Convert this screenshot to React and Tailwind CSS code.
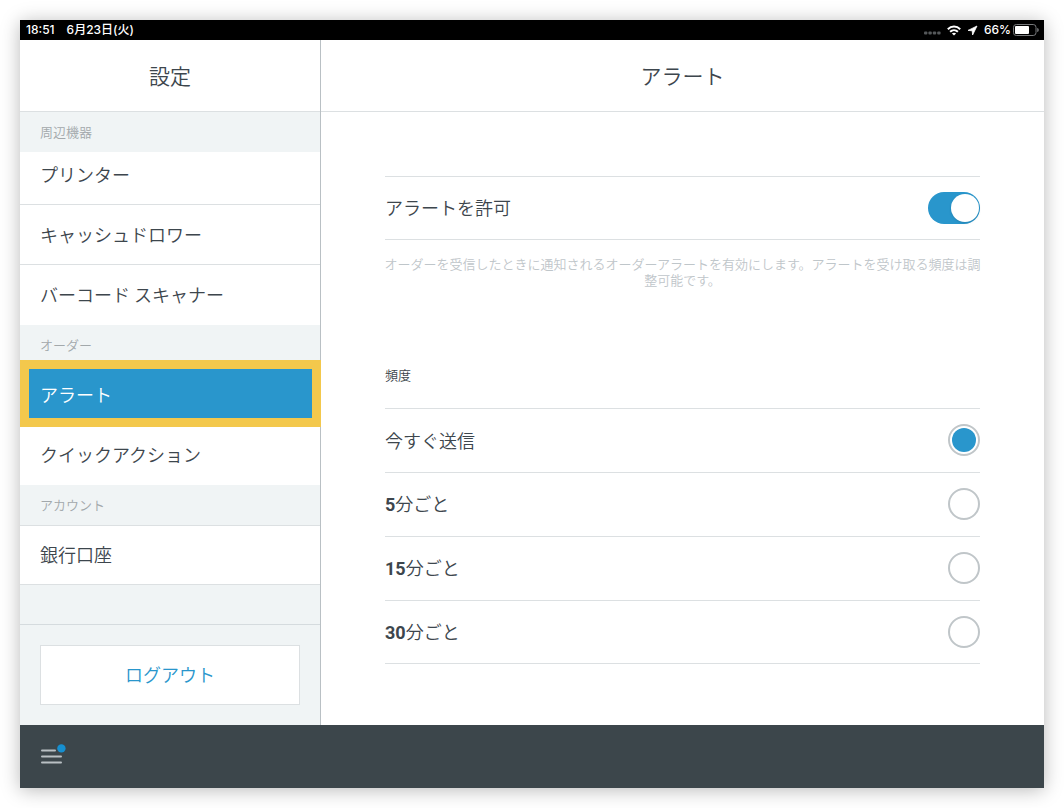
import { useState } from "react";

const peripherals = ["キャッシュドロワー", "バーコード スキャナー"];

const frequencies = [
  { id: "now", number: "", label: "今すぐ送信" },
  { id: "5", number: "5", label: "分ごと" },
  { id: "15", number: "15", label: "分ごと" },
  { id: "30", number: "30", label: "分ごと" },
];

function StatusBar() {
  return (
    <div className="flex h-5 shrink-0 items-center justify-between bg-black pl-1.5 pr-[5px] font-['Inter','Noto_Sans_CJK_JP',sans-serif] text-xs leading-5 font-medium text-white">
      <div className="flex gap-3">
        <span>18:51</span>
        <span>6月23日(火)</span>
      </div>
      <div className="flex items-center">
        <svg className="mt-1.5" width="17" height="4" viewBox="0 0 17 4" fill="#55585a" aria-hidden="true">
          <rect x="0" y="0.5" width="3.4" height="3" rx="1" />
          <rect x="4.4" y="0.5" width="3.4" height="3" rx="1" />
          <rect x="8.8" y="0.5" width="3.4" height="3" rx="1" />
          <rect x="13.2" y="0.5" width="3.4" height="3" rx="1" />
        </svg>
        <svg className="ml-1.5" width="14" height="11" viewBox="0 0 14 11" fill="none" stroke="#fff" strokeWidth="2" aria-hidden="true">
          <path d="M0.8 4.2C4.4 0.7 9.6 0.7 13.2 4.2" />
          <path d="M3.1 6.7C5.3 4.6 8.7 4.6 10.9 6.7" />
          <path d="M7 10.6L4.9 8.5C6.1 7.4 7.9 7.4 9.1 8.5Z" fill="#fff" stroke="none" />
        </svg>
        <svg className="ml-1.5" width="11" height="11" viewBox="0 0 11 11" fill="#fff" stroke="#fff" strokeWidth="0.8" strokeLinejoin="round" aria-hidden="true">
          <path d="M10 1L1 5.4L5.2 5.8L5.6 10Z" />
        </svg>
        <span className="ml-1.5">66%</span>
        <svg className="ml-0.5" width="26" height="12" viewBox="0 0 26 12" aria-hidden="true">
          <rect x="0.5" y="0.5" width="22.5" height="11" rx="2.8" fill="none" stroke="#77797b" />
          <rect x="2" y="2" width="14" height="8" rx="1" fill="#fff" />
          <path d="M24.2 4V8C25.4 7.6 25.8 6.8 25.8 6C25.8 5.2 25.4 4.4 24.2 4Z" fill="#77797b" />
        </svg>
      </div>
    </div>
  );
}

function SectionTitle({ children }) {
  return <h2 className="flex h-10 shrink-0 items-center px-5 pb-px text-[13px] leading-5 text-[#a2a8ab]">{children}</h2>;
}

function Sidebar() {
  return (
    <aside className="flex w-[301px] shrink-0 flex-col border-r border-[#b9c0c4] bg-[#f0f4f5]">
      <h1 className="flex h-18 shrink-0 items-center justify-center border-b border-[#dce0e2] bg-white pb-0.5 text-[21px] leading-8">設定</h1>

      <nav className="flex flex-col text-lg leading-7">
        <SectionTitle>周辺機器</SectionTitle>
        <a href="#printer" className="flex h-[53px] items-center border-b border-[#dce0e2] bg-white px-5 pb-2">
          プリンター
        </a>
        <div className="divide-y divide-[#dce0e2] bg-white">
          {peripherals.map((name) => (
            <a key={name} href={`#${name}`} className="flex h-15 items-center px-5 pb-0.5">
              {name}
            </a>
          ))}
        </div>

        <SectionTitle>オーダー</SectionTitle>
        <a href="#alerts" aria-current="page" className="relative flex h-15 items-center bg-[#2996cc] px-5 pb-0.5 text-white">
          アラート
          <span className="pointer-events-none absolute -top-[5px] -right-px -bottom-[2px] left-0 border-9 border-[#f3c84c]" />
        </a>
        <a href="#quick-actions" className="flex h-15 items-center bg-white px-5 pb-0.5">
          クイックアクション
        </a>

        <SectionTitle>アカウント</SectionTitle>
        <a href="#bank" className="flex h-15 items-center border-y border-[#dce0e2] bg-white px-5 pb-0.5">
          銀行口座
        </a>
      </nav>

      <div className="mt-auto border-t border-[#d5dbde] p-5">
        <button type="button" className="h-15 w-full border border-[#dce0e2] bg-white pb-0.5 text-lg text-[#2996cc]">
          ログアウト
        </button>
      </div>
    </aside>
  );
}

function AlertSettings() {
  const [enabled, setEnabled] = useState(true);
  const [frequency, setFrequency] = useState("now");

  return (
    <main className="min-w-0 flex-1 bg-white">
      <h1 className="flex h-18 items-center justify-center border-b border-[#dce0e2] pb-0.5 text-[21px] leading-8">アラート</h1>

      <div className="px-16 pt-16 pb-10 text-lg leading-7">
        <div className="flex h-16 items-center justify-between border-y border-[#dce0e2]">
          <label htmlFor="allow-alerts" className="pb-0.5">アラートを許可</label>
          <input
            id="allow-alerts"
            type="checkbox"
            role="switch"
            checked={enabled}
            onChange={(e) => setEnabled(e.target.checked)}
            className="flex h-8 w-13 cursor-pointer appearance-none items-center rounded-full bg-[#c0c6c9] px-px before:size-7 before:rounded-full before:bg-white before:shadow checked:justify-end checked:bg-[#2996cc]"
          />
        </div>
        <p className="-mx-1 mt-4 text-center text-[13px] leading-4 text-[#bfc6ca]">
          オーダーを受信したときに通知されるオーダーアラートを有効にします。アラートを受け取る頻度は調整可能です。
        </p>

        <fieldset className="mt-[77px]">
          <legend className="mb-[23px] text-[13px] leading-5">頻度</legend>
          {frequencies.map(({ id, number, label }) => (
            <div key={id} className="flex h-16 items-center justify-between border-t border-[#dce0e2] pb-px last:border-b last:pb-0">
              <label htmlFor={`frequency-${id}`} className="pb-px">
                {number && <b className="font-['Roboto',sans-serif] font-bold">{number}</b>}
                {label}
              </label>
              <input
                id={`frequency-${id}`}
                type="radio"
                name="frequency"
                checked={frequency === id}
                onChange={() => setFrequency(id)}
                className="flex size-8 cursor-pointer appearance-none items-center justify-center rounded-full border-2 border-[#c0c6c9] bg-white before:size-6 before:rounded-full checked:before:bg-[#2996cc]"
              />
            </div>
          ))}
        </fieldset>
      </div>
    </main>
  );
}

function BottomBar() {
  return (
    <footer className="flex h-[63px] shrink-0 items-center bg-[#3c464b] px-5">
      <button type="button" aria-label="メニュー">
        <svg width="28" height="27" viewBox="0 0 28 27" fill="none" aria-hidden="true">
          <g stroke="#b9c0c4" strokeWidth="2" strokeLinecap="round">
            <path d="M2 7.5H15" />
            <path d="M2 13.5H21" />
            <path d="M2 19.5H21" />
          </g>
          <circle cx="21.4" cy="5.4" r="4.2" fill="#168fd0" />
        </svg>
      </button>
    </footer>
  );
}

export default function App() {
  return (
    <div className="flex min-h-screen bg-white p-5 font-['Noto_Sans_CJK_JP',sans-serif] font-[350] text-[#3d464d]" lang="ja">
      <div className="flex min-w-0 flex-1 flex-col shadow-[0_2px_18px_rgba(0,0,0,0.28)]">
        <StatusBar />
        <div className="flex flex-1">
          <Sidebar />
          <AlertSettings />
        </div>
        <BottomBar />
      </div>
    </div>
  );
}
